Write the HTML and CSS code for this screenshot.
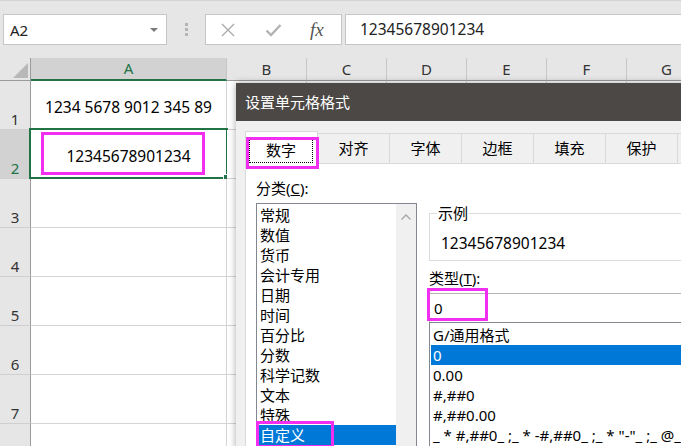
FILE: index.html
```html
<!DOCTYPE html>
<html lang="zh-CN">
<head>
  <meta charset="UTF-8" />
  <title>设置单元格格式</title>
  <link rel="stylesheet" href="styles.css">
</head>
<body>
  <div class="app">
    <div class="toolbar">
      <div class="namebox"><span>A2</span><span class="caret"></span></div>
      <div class="grip"><i></i><i></i><i></i></div>
      <div class="fx-buttons">
        <svg class="ico-x" width="16" height="16" viewBox="0 0 16 16"><path d="M2 2L14 14M14 2L2 14" stroke="#ababab" stroke-width="1.4" fill="none"/></svg>
        <svg class="ico-ok" width="17" height="16" viewBox="0 0 17 16"><path d="M1.5 8.5L6 13L15.5 3" stroke="#b3b3b3" stroke-width="2.4" fill="none"/></svg>
        <span class="fx">fx</span>
      </div>
      <div class="formula">12345678901234</div>
    </div>

    <div class="sheet">
      <div class="corner"><i></i></div>
      <div class="col-head sel">A</div>
      <div class="col-head">B</div>
      <div class="col-head">C</div>
      <div class="col-head">D</div>
      <div class="col-head">E</div>
      <div class="col-head">F</div>
      <div class="col-head">G</div>

      <div class="row-head">1</div>
      <div class="cell">1234 5678 9012 345 89</div>
      <div class="cell"></div><div class="cell"></div><div class="cell"></div><div class="cell"></div><div class="cell"></div><div class="cell"></div>

      <div class="row-head sel">2</div>
      <div class="cell active">
        12345678901234
        <span class="sel-box"><i class="handle"></i></span>
        <span class="mark mark-cell"></span>
      </div>
      <div class="cell"></div><div class="cell"></div><div class="cell"></div><div class="cell"></div><div class="cell"></div><div class="cell"></div>

      <div class="row-head">3</div>
      <div class="cell"></div><div class="cell"></div><div class="cell"></div><div class="cell"></div><div class="cell"></div><div class="cell"></div><div class="cell"></div>
      <div class="row-head">4</div>
      <div class="cell"></div><div class="cell"></div><div class="cell"></div><div class="cell"></div><div class="cell"></div><div class="cell"></div><div class="cell"></div>
      <div class="row-head">5</div>
      <div class="cell"></div><div class="cell"></div><div class="cell"></div><div class="cell"></div><div class="cell"></div><div class="cell"></div><div class="cell"></div>
      <div class="row-head">6</div>
      <div class="cell"></div><div class="cell"></div><div class="cell"></div><div class="cell"></div><div class="cell"></div><div class="cell"></div><div class="cell"></div>
      <div class="row-head">7</div>
      <div class="cell"></div><div class="cell"></div><div class="cell"></div><div class="cell"></div><div class="cell"></div><div class="cell"></div><div class="cell"></div>
      <div class="row-head"></div>
      <div class="cell"></div><div class="cell"></div><div class="cell"></div><div class="cell"></div><div class="cell"></div><div class="cell"></div><div class="cell"></div>
    </div>

    <div class="dialog">
      <div class="dialog-title">设置单元格格式</div>
      <div class="tabs">
        <div class="tab current"><span class="focus">数字</span><span class="mark mark-tab"></span></div>
        <div class="tab">对齐</div>
        <div class="tab">字体</div>
        <div class="tab">边框</div>
        <div class="tab">填充</div>
        <div class="tab">保护</div>
        <div class="tab-rest"></div>
      </div>
      <div class="panel">
        <div class="col-left">
          <div class="label">分类(<u>C</u>):</div>
          <div class="catlist">
            <div class="items">
              <div class="item">常规</div>
              <div class="item">数值</div>
              <div class="item">货币</div>
              <div class="item">会计专用</div>
              <div class="item">日期</div>
              <div class="item">时间</div>
              <div class="item">百分比</div>
              <div class="item">分数</div>
              <div class="item">科学记数</div>
              <div class="item">文本</div>
              <div class="item">特殊</div>
              <div class="item selected">自定义<span class="mark mark-item"></span></div>
            </div>
            <div class="scrollbar">
              <svg width="12" height="8" viewBox="0 0 12 8"><path d="M1.5 6.5L6 2L10.5 6.5" stroke="#a6a6a6" stroke-width="1.3" fill="none"/></svg>
            </div>
          </div>
        </div>
        <div class="col-right">
          <div class="sample">
            <span class="sample-label">示例</span>
            <div class="sample-value">12345678901234</div>
          </div>
          <div class="label type-label">类型(<u>T</u>):</div>
          <div class="type-input">0<span class="mark mark-input"></span></div>
          <div class="fmtlist">
            <div class="item">G/通用格式</div>
            <div class="item selected">0</div>
            <div class="item">0.00</div>
            <div class="item">#,##0</div>
            <div class="item">#,##0.00</div>
            <div class="item">_ * #,##0_ ;_ * -#,##0_ ;_ * "-"_ ;_ @_</div>
          </div>
        </div>
      </div>
    </div>
  </div>
</body>
</html>
```

FILE: styles.css
```css
* {
  box-sizing: border-box;
}

html, body {
  margin: 0;
  padding: 0;
}

body {
  background: #e6e6e6;
  font-family: "Noto Sans", "Noto Sans CJK SC", sans-serif;
  color: #000;
}

.app {
  position: relative;
  width: 681px;
  height: 446px;
  overflow: hidden;
}

/* formula bar */

.toolbar {
  height: 58px;
  display: flex;
  align-items: flex-start;
  padding-top: 13px;
  border-top: 1px solid #d3d3d3;
}

.namebox {
  margin-left: 3px;
  width: 164px;
  height: 31px;
  background: #fff;
  border: 1px solid #c6c6c6;
  display: flex;
  align-items: center;
  justify-content: space-between;
  padding: 0 8px 0 6px;
  font-size: 15px;
  color: #222;
}

.caret {
  width: 0;
  height: 0;
  border-left: 4px solid transparent;
  border-right: 4px solid transparent;
  border-top: 4px solid #7a7a7a;
}

.grip {
  margin: 9px 0 0 18px;
  display: flex;
  flex-direction: column;
  gap: 2px;
}

.grip i {
  display: block;
  width: 3px;
  height: 3px;
  background: #b5b5b5;
}

.fx-buttons {
  margin-left: 17px;
  width: 137px;
  height: 31px;
  background: #fff;
  border: 1px solid #c6c6c6;
  display: flex;
  align-items: center;
  padding-left: 14px;
}

.ico-ok {
  margin-left: 29px;
}

.fx {
  margin-left: 28px;
  font-family: "Liberation Serif", serif;
  font-style: italic;
  font-size: 19px;
  color: #555;
  line-height: 20px;
}

.formula {
  margin-left: 3px;
  flex: 1;
  height: 31px;
  background: #fff;
  border: 1px solid #c6c6c6;
  border-right: none;
  padding-left: 14px;
  font-size: 15.5px;
  line-height: 29px;
  color: #222;
}

/* grid */

.sheet {
  display: grid;
  grid-template-columns: 31px 196px repeat(6, 80px);
  grid-template-rows: 23px repeat(8, 49px);
}

.corner {
  border-right: 1px solid #9b9b9b;
  border-bottom: 1px solid #9b9b9b;
  display: flex;
  justify-content: flex-end;
  align-items: flex-end;
  padding: 0 2px 2px 0;
}

.corner i {
  width: 0;
  height: 0;
  border-left: 15px solid transparent;
  border-bottom: 15px solid #b8b8b8;
}

.col-head {
  border-right: 1px solid #c6c6c6;
  border-bottom: 1px solid #9b9b9b;
  text-align: center;
  font-size: 15px;
  line-height: 22px;
  color: #333;
}

.col-head.sel {
  background: #d2d2d2;
  border-bottom: 2px solid #217346;
  color: #217346;
  line-height: 21px;
}

.row-head {
  border-right: 1px solid #9b9b9b;
  border-bottom: 1px solid #cfcfcf;
  display: flex;
  align-items: flex-end;
  justify-content: center;
  padding-bottom: 1px;
  font-size: 15px;
  line-height: 17px;
  color: #333;
}

.row-head.sel {
  background: #d2d2d2;
  color: #217346;
}

.cell {
  position: relative;
  background: #fff;
  border-right: 1px solid #d4d4d4;
  border-bottom: 1px solid #d4d4d4;
  display: flex;
  align-items: center;
  justify-content: center;
  padding-top: 3px;
  font-size: 15.5px;
}

.sel-box {
  position: absolute;
  left: -2px;
  top: -2px;
  right: -2px;
  bottom: -1px;
  border: 2px solid #217346;
}

.handle {
  position: absolute;
  right: -4px;
  bottom: -4px;
  width: 7px;
  height: 7px;
  background: #217346;
  border: 1px solid #fff;
}

/* hand-drawn highlight boxes */

.mark {
  position: absolute;
  border: 3px solid #f22ef0;
}

.mark-cell {
  left: 10px;
  top: 2px;
  width: 164px;
  height: 43px;
}

.mark-tab {
  left: 0;
  top: 5px;
  width: 73px;
  height: 32px;
}

.mark-item {
  left: -1px;
  top: -4px;
  width: 78px;
  height: 27px;
}

.mark-input {
  left: -3px;
  top: -6px;
  width: 61px;
  height: 33px;
}

/* dialog */

.dialog {
  position: absolute;
  left: 236px;
  top: 83px;
  width: 470px;
  height: 380px;
  background: #f0f0f0;
  box-shadow: 0 0 7px rgba(0, 0, 0, 0.35);
}

.dialog-title {
  height: 38px;
  background: #4b4845;
  color: #fff;
  font-size: 15px;
  line-height: 38px;
  padding-left: 9px;
}

.tabs {
  display: flex;
  align-items: flex-end;
  height: 33px;
  margin: 10px 0 0 9px;
}

.tab {
  width: 72px;
  height: 31px;
  border-top: 1px solid #d9d9d9;
  border-right: 1px solid #d9d9d9;
  border-bottom: 1px solid #d9d9d9;
  text-align: center;
  font-size: 15px;
  line-height: 29px;
}

.tab.current {
  position: relative;
  width: 73px;
  height: 33px;
  background: #fff;
  border-left: 1px solid #d9d9d9;
  border-bottom: none;
  padding: 6px 4px 0 3px;
  line-height: 20px;
}

.focus {
  display: block;
  height: 25px;
  line-height: 22px;
  border: 1px dotted #000;
}

.tab-rest {
  flex: 1;
  height: 31px;
  border-top: 1px solid #d9d9d9;
  border-bottom: 1px solid #d9d9d9;
}

.panel {
  margin-left: 9px;
  height: 300px;
  background: #fff;
  border-left: 1px solid #d9d9d9;
  display: flex;
  gap: 12px;
  padding-left: 10px;
  font-size: 15px;
}

.label {
  line-height: 20px;
  margin-top: 14px;
}

.col-left {
  width: 161px;
}

.catlist {
  margin-top: 5px;
  height: 260px;
  border: 1px solid #828790;
  display: flex;
}

.items {
  flex: 1;
  padding-top: 1px;
}

.item {
  position: relative;
  height: 20px;
  line-height: 20px;
  padding-left: 3px;
  white-space: nowrap;
}

.item.selected {
  background: #0078d7;
  color: #fff;
}

.scrollbar {
  width: 20px;
  background: #f0f0f0;
  display: flex;
  justify-content: center;
  align-items: flex-start;
  padding-top: 9px;
}

.col-right {
  flex: 1;
}

.sample {
  position: relative;
  margin-top: 49px;
  height: 48px;
  border: 1px solid #dcdcdc;
}

.sample-label {
  position: absolute;
  left: 7px;
  top: -11px;
  padding: 0 1px;
  background: #fff;
  line-height: 20px;
}

.sample-value {
  padding: 19px 0 0 11px;
  line-height: 20px;
  font-size: 15.5px;
}

.type-label {
  margin-top: 7px;
}

.type-input {
  position: relative;
  margin-top: 5px;
  height: 29px;
  border: 1px solid #b4b4b4;
  border-bottom: none;
  padding-left: 4px;
  line-height: 28px;
}

.fmtlist {
  height: 140px;
  border: 1px solid #828790;
  padding: 2px 0 0 1px;
}

.fmtlist .item {
  padding-left: 2px;
}
```
